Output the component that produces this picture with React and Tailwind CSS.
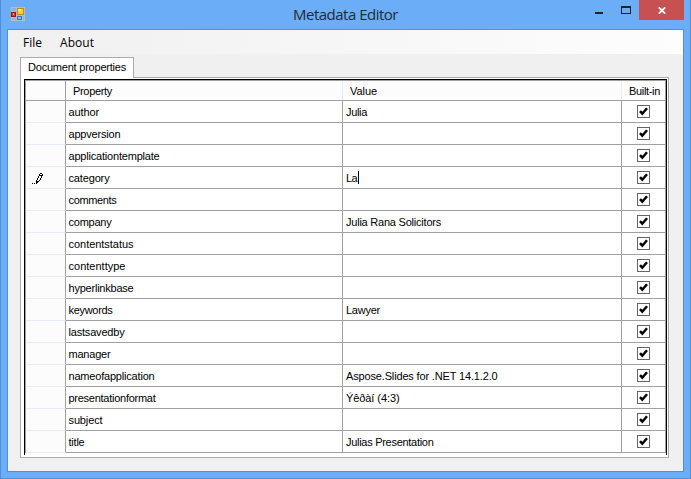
import React from "react";

const rows = [
  { name: "author", value: "Julia", nw: 30.5, vw: 21 },
  { name: "appversion", value: "", nw: 52 },
  { name: "applicationtemplate", value: "", nw: 91 },
  { name: "category", value: "La", nw: 41, vw: 11, editing: true },
  { name: "comments", value: "", nw: 48 },
  { name: "company", value: "Julia Rana Solicitors", nw: 43, vw: 95 },
  { name: "contentstatus", value: "", nw: 65 },
  { name: "contenttype", value: "", nw: 57 },
  { name: "hyperlinkbase", value: "", nw: 65 },
  { name: "keywords", value: "Lawyer", nw: 44, vw: 34 },
  { name: "lastsavedby", value: "", nw: 56 },
  { name: "manager", value: "", nw: 42 },
  { name: "nameofapplication", value: "Aspose.Slides for .NET 14.1.2.0", nw: 86, vw: 151.5 },
  { name: "presentationformat", value: "Ýêðàí (4:3)", nw: 87, vw: 53.5 },
  { name: "subject", value: "", nw: 34 },
  { name: "title", value: "Julias Presentation", nw: 16, vw: 87.5 },
];

// Text whose natural width is fitted to the column metrics with letter spacing.
function Fit({ width, children }) {
  const ref = React.useRef(null);
  React.useLayoutEffect(() => {
    const el = ref.current;
    if (!el || !width) return;
    el.style.letterSpacing = "0px";
    const natural = el.getBoundingClientRect().width;
    el.style.letterSpacing = (width - natural) / children.length + "px";
  }, [width, children]);
  return (
    <span ref={ref} className="inline-block whitespace-pre">
      {children}
    </span>
  );
}

function AppIcon() {
  return (
    <svg width="14" height="14" viewBox="0 0 14 14" shapeRendering="crispEdges">
      <rect width="14" height="14" fill="#b9bcc0" />
      <rect x="1" y="1" width="4" height="3" fill="#86b4e6" />
      <rect x="1" y="11" width="4" height="2" fill="#86b4e6" />
      <rect x="0" y="5" width="5" height="5" fill="#9c1510" />
      <rect x="1" y="6" width="3" height="3" fill="#d8402e" />
      <rect x="2" y="6" width="1" height="2" fill="#f09a8a" />
      <rect x="6" y="1" width="7" height="7" fill="#c98a10" />
      <rect x="7" y="2" width="5" height="5" fill="#fbd13a" />
      <rect x="7" y="2" width="3" height="2" fill="#fdeb9a" />
      <rect x="6" y="9" width="5" height="4" fill="#3d6fc4" />
      <rect x="7" y="10" width="3" height="2" fill="#8db8f4" />
      <rect x="12" y="9" width="1" height="4" fill="#86b4e6" />
    </svg>
  );
}

function Check() {
  return (
    <svg width="13" height="13" viewBox="0 0 13 13" className="block">
      <rect x="0.5" y="0.5" width="12" height="12" fill="#fff" stroke="#666" />
      <path d="M3 6.2 L5.3 8.7 L10 3.2" fill="none" stroke="#000" strokeWidth="2.5" />
    </svg>
  );
}

function Pencil() {
  return (
    <svg width="12" height="12" viewBox="0 0 12 12" shapeRendering="crispEdges" fill="#000">
      <path d="M8 0h2v1H8zM7 1h1v1H7zM10 1h1v1h-1zM7 2h4v1H7zM6 3h1v2H6zM9 3h1v2H9zM5 5h1v2H5zM8 5h1v2H8zM4 7h1v4H4zM7 7h1v1H7zM5 8h2v1H5zM5 9h1v1H5zM0 10h1v1H0zM2 10h1v1H2z" />
    </svg>
  );
}

export default function App() {
  return (
    <div className="flex h-[479px] w-[691px] flex-col border-x border-b border-[#4f8fd6] bg-[#6badf6] font-['Liberation_Sans',Arial,sans-serif] text-[11px] text-black">
      <header className="relative flex h-[29px] shrink-0 justify-between">
        <div className="pt-[7px] pl-[10px]">
          <AppIcon />
        </div>
        <h1 className="absolute top-[4px] left-[292px] font-['Open_Sans',sans-serif] text-[15px] leading-[21px] text-[#222b36]">
          <Fit width={105}>Metadata Editor</Fit>
        </h1>
        <div className="flex h-5">
          <svg width="54" height="20" shapeRendering="crispEdges" fill="#222">
            <rect x="10" y="12" width="8" height="2" />
            <path fillRule="evenodd" d="M36 6h10v8H36zM37 8v5h8V8z" />
          </svg>
          <div className="mr-[6px] flex w-[45px] items-center justify-center bg-[#c75050]">
            <svg width="8" height="7" viewBox="0 0 8 7" className="mt-px">
              <path d="M0.8 0.3 L7.2 6.7 M7.2 0.3 L0.8 6.7" stroke="#fff" strokeWidth="1.7" />
            </svg>
          </div>
        </div>
      </header>
      <main className="mx-[6px] mb-[6px] flex grow flex-col border border-[#528fd4] bg-[#f0f0f0]">
        <nav className="flex h-6 shrink-0 bg-linear-to-r from-[#f0f0f0] to-[#fdfdfd] pl-[15px] font-['Open_Sans',sans-serif] text-[12px] leading-[25px]">
          <div className="w-[37px]">
            <Fit width={19}>File</Fit>
          </div>
          <Fit width={34}>About</Fit>
        </nav>
        <section className="mt-[3px] ml-3 flex w-[649px] flex-col">
          <div className="z-10 -mb-px flex h-[21px] w-[114px] border-x border-t border-[#acacac] bg-white pl-[7px] leading-[19px]">
            <Fit width={98}>Document properties</Fit>
          </div>
          <div className="h-[381px] border border-[#acacac] bg-white pt-px pl-[3px]">
            <div className="h-[376px] w-[643px] border-x border-t border-black">
              <div className="h-[373px] border-x border-t border-[#a0a0a0]">
                <div className="flex h-5 border-b border-[#a0a0a0] bg-[#fcfcfc] leading-[20px]">
                  <div className="w-[40px] border-r border-[#a0a0a0]" />
                  <div className="w-[277px] border-r border-[#e3ebf7] pl-[7px]">
                    <Fit width={39}>Property</Fit>
                  </div>
                  <div className="w-[279px] border-r border-[#e3ebf7] pl-[7px]">
                    <Fit width={27}>Value</Fit>
                  </div>
                  <div className="pl-[7px]">
                    <Fit width={31}>Built-in</Fit>
                  </div>
                </div>
                {rows.map((row) => (
                  <div key={row.name} className="flex h-[22px] leading-[23px]">
                    <div className="w-[40px] border-r border-b border-r-[#a0a0a0] border-b-[#e5edf8] bg-[#fcfcfc] pt-[6px] pl-[6px]">
                      {row.editing && <Pencil />}
                    </div>
                    <div className="w-[277px] border-r border-b border-[#a0a0a0] pl-[2.5px]">
                      <Fit width={row.nw}>{row.name}</Fit>
                    </div>
                    <div className="flex w-[279px] border-r border-b border-[#a0a0a0] pl-[3px]">
                      <Fit width={row.vw}>{row.value}</Fit>
                      {row.editing && <i className="mt-[4px] ml-px h-[13px] w-px bg-black" />}
                    </div>
                    <div className="w-[43px] border-b border-[#a0a0a0] pt-1 pl-[15px]">
                      <Check />
                    </div>
                  </div>
                ))}
              </div>
            </div>
          </div>
        </section>
      </main>
    </div>
  );
}
